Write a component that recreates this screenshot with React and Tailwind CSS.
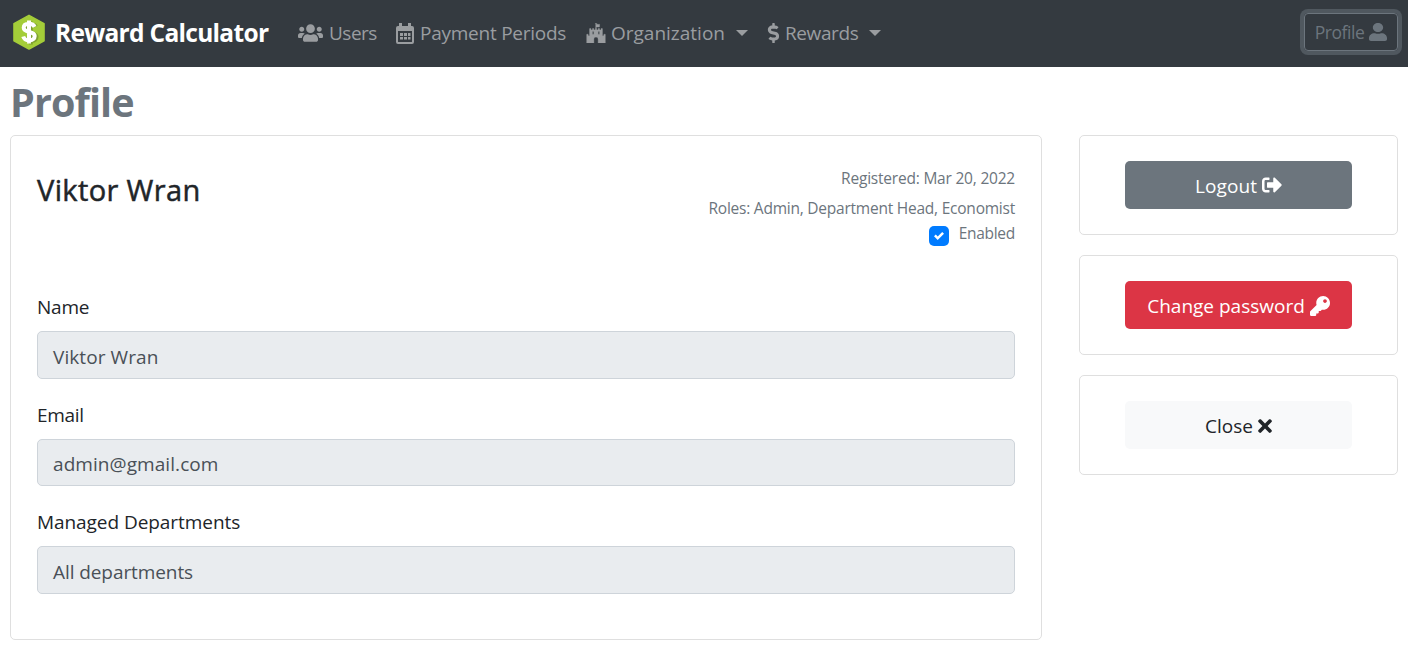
import React from "react";
import {
  FaUsers,
  FaFortAwesome,
  FaDollarSign,
  FaUser,
  FaSignOutAlt,
  FaKey,
  FaTimes,
} from "react-icons/fa";

function Logo() {
  return (
    <svg className="h-[38px] w-[34px] shrink-0" viewBox="0 0 34 38">
      <path d="M17 2.400 32 10.600V27.800L17 36 2 27.800V10.600Z" fill="#a4cd39" stroke="#a4cd39" strokeWidth="1.600" strokeLinejoin="round" />
      <path d="M24 13.500C23 11.300 21 11.800 19 11.600c-3.200 0-5.300 1.500-5.300 4 0 5.500 11 2.800 11 8.200 0 2.700-2.200 4.300-5.500 4.300-3 0-5.200-1.200-6-3.800M19 8.500V31.500" fill="none" stroke="#6d8d2c" strokeWidth="3.600" opacity=".7" />
      <path d="M22.600 13.800C21.600 11.600 19.600 10.800 17 10.800c-3.200 0-5.300 1.500-5.300 4 0 5.500 11 2.800 11 8.200 0 2.700-2.200 4.300-5.500 4.300-3 0-5.200-1.200-6-3.800M17 7.500V30.500" fill="none" stroke="#fff" strokeWidth="4" />
    </svg>
  );
}

function CalendarIcon() {
  return (
    <svg className="mb-[1px] h-[21px] w-[18px]" viewBox="0 0 18 21" fill="currentColor">
      <path fillRule="evenodd" d="M3 0h3v3h6V0h3v3h1a2 2 0 0 1 2 2v14a2 2 0 0 1-2 2H2a2 2 0 0 1-2-2V5a2 2 0 0 1 2-2h1ZM2 8v10.500a.5.500 0 0 0 .5.500h13a.5.500 0 0 0 .5-.5V8Z" />
      <path d="M4 10h3v3H4zM8 10h3v3H8zM12 10h2.500v3H12zM4 14h3v2.500H4zM8 14h3v2.500H8zM12 14h2.500v2.500H12z" />
    </svg>
  );
}

function Caret() {
  return <span className="mb-[2px] ml-[11px] h-0 w-0 border-x-[6px] border-t-[6px] border-x-transparent border-t-[#9a9da0]" />;
}

function Field({ label, value, className, labelClass, boxClass }) {
  return (
    <div className={className}>
      <div className={"h-[30px] text-[19px] leading-[30px] " + labelClass}>{label}</div>
      <div className={"mt-[9px] flex items-center rounded-[5px] border border-[#ced4da] bg-[#e9ecef] px-[15px] text-[19px] text-[#495057] " + boxClass}>
        {value}
      </div>
    </div>
  );
}

function Action({ children, className }) {
  return (
    <div className="flex h-[100px] items-start justify-center rounded-[5px] border border-[#dfdfdf] pt-[25px]">
      <button className={"flex h-[48px] w-[227px] items-center justify-center gap-[5px] rounded-[5px] pt-[2px] text-[19px] " + className}>
        {children}
      </button>
    </div>
  );
}

export default function App() {
  return (
    <div className="h-[650px] overflow-hidden bg-white font-['Open_Sans','Noto_Sans',sans-serif] text-[#212529]">
      <nav className="flex h-[67px] items-center bg-[#343a40] text-[19px] whitespace-nowrap text-[#9a9da0]">
        <div className="flex w-[298px] items-center pb-[3px] pl-3">
          <Logo />
          <span className="ml-[9px] pt-[3px] text-[24.500px] font-bold tracking-[-0.700px] text-white">Reward Calculator</span>
        </div>
        <div className="flex w-[98px] items-center">
          <FaUsers className="mb-[2px] h-5 w-[25px]" />
          <span className="ml-[6px] tracking-[-0.500px]">Users</span>
        </div>
        <div className="flex w-[190px] items-center">
          <CalendarIcon />
          <span className="ml-[6px] tracking-[-0.250px]">Payment Periods</span>
        </div>
        <div className="flex w-[180px] items-center">
          <FaFortAwesome className="mb-[1px] h-5 w-5" stroke="currentColor" strokeWidth="10" />
          <span className="ml-[5px]">Organization</span>
          <Caret />
        </div>
        <div className="flex items-center">
          <FaDollarSign className="mb-[2px] ml-[1px] h-5 w-[13px]" />
          <span className="ml-[5px] tracking-[-0.400px]">Rewards</span>
          <Caret />
        </div>
        <button className="mr-[10px] mb-[3px] ml-auto flex h-[38px] w-[94px] items-center justify-center gap-[5px] rounded-[4px] border border-[#6c757d] text-[17.500px] text-[#6c757d] shadow-[0_0_0_4px_#50585f]">
          <span className="tracking-[-0.450px]">Profile</span>
          <FaUser className="mb-[1px] h-[18px] w-[18px] scale-x-[1.140]" />
        </button>
      </nav>

      <h1 className="mt-[10px] ml-[10px] h-[50px] text-[39.500px] leading-[50px] font-bold tracking-[-0.900px] text-[#6c757d]">Profile</h1>

      <main className="mt-[8px] flex items-start gap-[37px] pl-[10px]">
        <section className="h-[505px] w-[1032px] rounded-[5px] border border-[#dfdfdf] px-[26px]">
          <header className="flex h-[155px] justify-between">
            <h2 className="mt-[34px] h-[40px] text-[29px] leading-[40px] font-normal tracking-[0.370px] [-webkit-text-stroke:0.5px_#212529]">Viktor Wran</h2>
            <div className="mt-[27px] flex flex-col items-end text-[15.500px] leading-[30px] text-[#6c757d]">
              <div className="tracking-[-0.210px]">Registered: Mar 20, 2022</div>
              <div className="tracking-[-0.230px]">Roles: Admin, Department Head, Economist</div>
              <div className="mt-[-5px] flex items-center gap-[10px]">
                <span className="mt-[5px] flex h-5 w-5 items-center justify-center rounded-[5px] bg-[#007bff]">
                  <svg className="h-[10px] w-[10px]" viewBox="0 0 8 8" fill="#fff">
                    <path d="M6.564.75l-3.590 3.612-1.538-1.550L0 4.260l2.974 2.990L8 2.193z" />
                  </svg>
                </span>
                <span className="tracking-[-0.280px]">Enabled</span>
              </div>
            </div>
          </header>
          <Field className="mt-[1px]" label="Name" value="Viktor Wran" labelClass="tracking-[-0.200px]" boxClass="h-[48px] pt-[4px] tracking-[0.080px]" />
          <Field className="mt-[21px]" label="Email" value="admin@gmail.com" labelClass="tracking-[-0.300px]" boxClass="h-[47px] pt-[3px] tracking-[0.070px]" />
          <Field className="mt-[21px]" label="Managed Departments" value="All departments" labelClass="tracking-[-0.060px]" boxClass="h-[48px] pt-[4px] tracking-[-0.080px]" />
        </section>

        <aside className="flex w-[319px] flex-col gap-5">
          <Action className="bg-[#6c757d] text-white">
            <span className="tracking-[0.100px]">Logout</span>
            <FaSignOutAlt className="mb-[2px] h-5 w-5" />
          </Action>
          <Action className="bg-[#dc3545] text-white">
            <span>Change password</span>
            <FaKey className="mb-[1px] h-5 w-5" />
          </Action>
          <Action className="bg-[#f8f9fa] text-[#212529]">
            <span>Close</span>
            <FaTimes className="mb-[1px] h-5 w-[14px]" />
          </Action>
        </aside>
      </main>
    </div>
  );
}
